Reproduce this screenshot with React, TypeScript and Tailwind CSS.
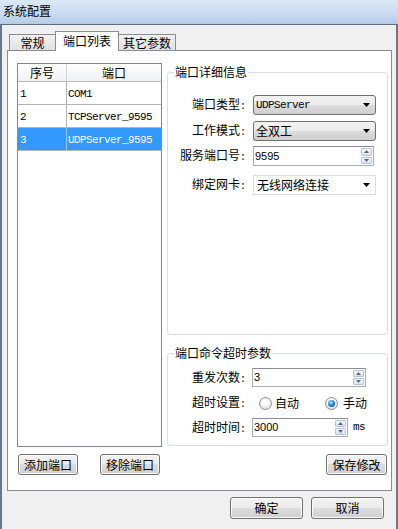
import React from "react";

const cjk = "font-['Noto_Sans_CJK_SC',sans-serif]";

function Btn({ children, className }: { children: React.ReactNode; className: string }) {
  return (
    <div
      className={
        "flex items-center justify-center rounded-[3px] border border-[#707070] bg-[linear-gradient(#f2f2f2_0%,#ebebeb_50%,#dddddd_50%,#cfcfcf_100%)] shadow-[inset_0_0_0_1px_#fbfbfb] text-[12px] leading-none text-black " +
        className
      }
    >
      {children}
    </div>
  );
}

function Arrow() {
  return (
    <svg width="7" height="4" viewBox="0 0 7 4" className="shrink-0">
      <path d="M0 0h7L3.5 4z" fill="#000" />
    </svg>
  );
}

function SpinBtns() {
  return (
    <div className="my-[1px] mr-[1px] flex w-[11px] flex-col gap-px">
      <div className="flex flex-1 items-center justify-center rounded-[1px] border border-[#b9c5d3] bg-[linear-gradient(#f5f8fb,#dbe4ee)]">
        <svg width="5" height="3" viewBox="0 0 5 3">
          <path d="M0 3h5L2.5 0z" fill="#4d6a92" />
        </svg>
      </div>
      <div className="flex flex-1 items-center justify-center rounded-[1px] border border-[#b9c5d3] bg-[linear-gradient(#f5f8fb,#dbe4ee)]">
        <svg width="5" height="3" viewBox="0 0 5 3">
          <path d="M0 0h5L2.5 3z" fill="#4d6a92" />
        </svg>
      </div>
    </div>
  );
}

function Label({ text }: { text: string }) {
  return (
    <div className={"w-[78px] shrink-0 text-right text-[12px] leading-none text-black " + cjk}>
      {text}
      <span className="font-['Liberation_Mono',monospace] text-[10px]">:</span>
    </div>
  );
}

function Group({ title, className, children }: { title: string; className: string; children: React.ReactNode }) {
  return (
    <div className={"relative rounded-[3px] border border-[#d5dfe5] bg-white " + className}>
      <div className={"absolute left-[6px] top-[-8px] bg-white px-[1px] text-[12px] leading-[14px] text-black " + cjk}>
        {title}
      </div>
      {children}
    </div>
  );
}

const mono = "font-['Liberation_Mono',monospace] text-[11px] tracking-[-0.6px] leading-none";

export default function App() {
  return (
    <div className={"flex h-[529px] w-[398px] flex-col overflow-hidden bg-[#f0f0f0] " + cjk}>
      {/* title bar */}
      <div className="flex h-[24px] shrink-0 items-center bg-[linear-gradient(180deg,#dbe8f7_0%,#cbdcf0_55%,#b5cbe5_100%)] pl-[3px] pb-[2px]">
        <span className="text-[12px] leading-none text-black">系统配置</span>
      </div>
      {/* body */}
      <div className="flex flex-1 flex-col border-l-2 border-r-2 border-t border-[#66778e] border-t-[#5e6b7c]">
        {/* tabs */}
        <div className="mt-[6px] flex h-[19px] items-end pl-[7px]">
          <div className="flex h-[16px] w-[47px] items-center justify-center border border-b-0 border-[#898c95] bg-[linear-gradient(#f2f2f2,#e0e0e0)] text-[12px] leading-none">
            常规
          </div>
          <div className="relative z-10 -mb-px -ml-px flex h-[20px] w-[64px] items-start justify-center border border-b-0 border-[#898c95] bg-white pt-[3px] text-[12px] leading-none">
            端口列表
          </div>
          <div className="-ml-px flex h-[16px] w-[58px] items-center justify-center border border-b-0 border-[#898c95] bg-[linear-gradient(#f2f2f2,#e0e0e0)] text-[12px] leading-none">
            其它参数
          </div>
        </div>
        {/* panel */}
        <div className="ml-[5px] flex h-[441px] w-[385px] flex-col border border-[#898c95] bg-white pl-[9px] pt-[12px]">
          <div className="flex">
            {/* list */}
            <div className="flex h-[384px] w-[145px] flex-col border border-[#828790] bg-white">
              <div className="flex h-[18px] border-b border-[#bcbcbc] bg-[linear-gradient(#ffffff,#f0f1f3)] text-[12px] leading-none">
                <div className="flex w-[49px] items-center justify-center border-r border-[#d5d5d5]">序号</div>
                <div className="flex flex-1 items-center justify-center">端口</div>
              </div>
              {[
                ["1", "COM1"],
                ["2", "TCPServer_9595"],
                ["3", "UDPServer_9595"],
              ].map(([n, name], i) => (
                <div
                  key={n}
                  className={
                    "flex h-[23px] border-b border-[#b4b4b4] " +
                    mono +
                    " " +
                    (i === 2 ? "bg-[#3399ff] text-white" : "text-black")
                  }
                >
                  <div
                    className={
                      "flex w-[49px] items-center border-r pl-[2px] pt-[2px] " +
                      (i === 2 ? "border-[#9cc8f5]" : "border-[#b4b4b4]")
                    }
                  >
                    {n}
                  </div>
                  <div className="flex flex-1 items-center pl-[1px] pt-[2px]">{name}</div>
                </div>
              ))}
            </div>
            {/* right column */}
            <div className="ml-[5px] flex w-[221px] flex-col pt-[9px]">
              <Group title="端口详细信息" className="h-[263px] pt-[22px]">
                <div className="flex h-[20px] items-center">
                  <Label text="端口类型" />
                  <div className="ml-[7px] flex h-[20px] w-[123px] items-center rounded-[3px] border border-[#707070] bg-[linear-gradient(#f2f2f2_0%,#ebebeb_50%,#dddddd_50%,#cfcfcf_100%)] pl-[2px] pr-[5px]">
                    <span className={"flex-1 text-black " + mono}>UDPServer</span>
                    <Arrow />
                  </div>
                </div>
                <div className="mt-[6px] flex h-[20px] items-center">
                  <Label text="工作模式" />
                  <div className="ml-[7px] flex h-[20px] w-[123px] items-center rounded-[3px] border border-[#707070] bg-[linear-gradient(#f2f2f2_0%,#ebebeb_50%,#dddddd_50%,#cfcfcf_100%)] pl-[2px] pr-[5px]">
                    <span className="flex-1 text-[12px] leading-none text-black">全双工</span>
                    <Arrow />
                  </div>
                </div>
                <div className="mt-[5px] flex h-[20px] items-center">
                  <Label text="服务端口号" />
                  <div className="ml-[7px] flex h-[20px] w-[121px] border border-[#abadb3] border-t-[#8a8d96] bg-white">
                    <div className="flex flex-1 items-center pl-[1px] font-['Liberation_Sans',sans-serif] text-[11px] leading-none text-black">9595</div>
                    <SpinBtns />
                  </div>
                </div>
                <div className="mt-[9px] flex h-[20px] items-center">
                  <Label text="绑定网卡" />
                  <div className="ml-[7px] flex h-[20px] w-[123px] items-center border border-[#dadce3] bg-white pl-[3px] pr-[5px]">
                    <span className="flex-1 text-[12px] leading-none text-black">无线网络连接</span>
                    <Arrow />
                  </div>
                </div>
              </Group>
              <Group title="端口命令超时参数" className="mt-[18px] h-[93px] pt-[14px]">
                <div className="flex h-[19px] items-center">
                  <Label text="重发次数" />
                  <div className="ml-[6px] flex h-[19px] w-[114px] border border-[#abadb3] border-t-[#8a8d96] bg-white">
                    <div className="flex flex-1 items-center pl-[1px] font-['Liberation_Sans',sans-serif] text-[11px] leading-none text-black">3</div>
                    <SpinBtns />
                  </div>
                </div>
                <div className="mt-[8px] flex h-[16px] items-center">
                  <Label text="超时设置" />
                  <span className="ml-[13px] h-[13px] w-[13px] rounded-full border border-[#8e8f8f] bg-[radial-gradient(circle_at_50%_40%,#ffffff_20%,#d6d6d6)]" />
                  <span className="ml-[3px] text-[12px] leading-none text-black">自动</span>
                  <span className="ml-[26px] flex h-[13px] w-[13px] items-center justify-center rounded-full border border-[#8e8f8f] bg-[radial-gradient(circle_at_50%_40%,#ffffff_20%,#d6d6d6)]">
                    <span className="h-[7px] w-[7px] rounded-full bg-[radial-gradient(circle_at_40%_35%,#b6ebff_0%,#2a8ad6_45%,#0b3c78_100%)]" />
                  </span>
                  <span className="ml-[5px] text-[12px] leading-none text-black">手动</span>
                </div>
                <div className="mt-[7px] flex h-[19px] items-center">
                  <Label text="超时时间" />
                  <div className="ml-[6px] flex h-[19px] w-[96px] border border-[#abadb3] border-t-[#8a8d96] bg-white">
                    <div className="flex flex-1 items-center pl-[1px] font-['Liberation_Sans',sans-serif] text-[11px] leading-none text-black">3000</div>
                    <SpinBtns />
                  </div>
                  <span className={"ml-[5px] text-black " + mono}>ms</span>
                </div>
              </Group>
            </div>
          </div>
          {/* panel buttons */}
          <div className="mt-[7px] flex h-[21px] pr-[4px]">
            <Btn className="ml-[1px] w-[60px]">添加端口</Btn>
            <Btn className="ml-[22px] w-[60px]">移除端口</Btn>
            <Btn className="ml-auto w-[61px]">保存修改</Btn>
          </div>
        </div>
        {/* dialog buttons */}
        <div className="mt-[6px] flex justify-end gap-[8px] pr-[12px]">
          <Btn className="h-[22px] w-[73px]">确定</Btn>
          <Btn className="h-[22px] w-[73px]">取消</Btn>
        </div>
      </div>
    </div>
  );
}
